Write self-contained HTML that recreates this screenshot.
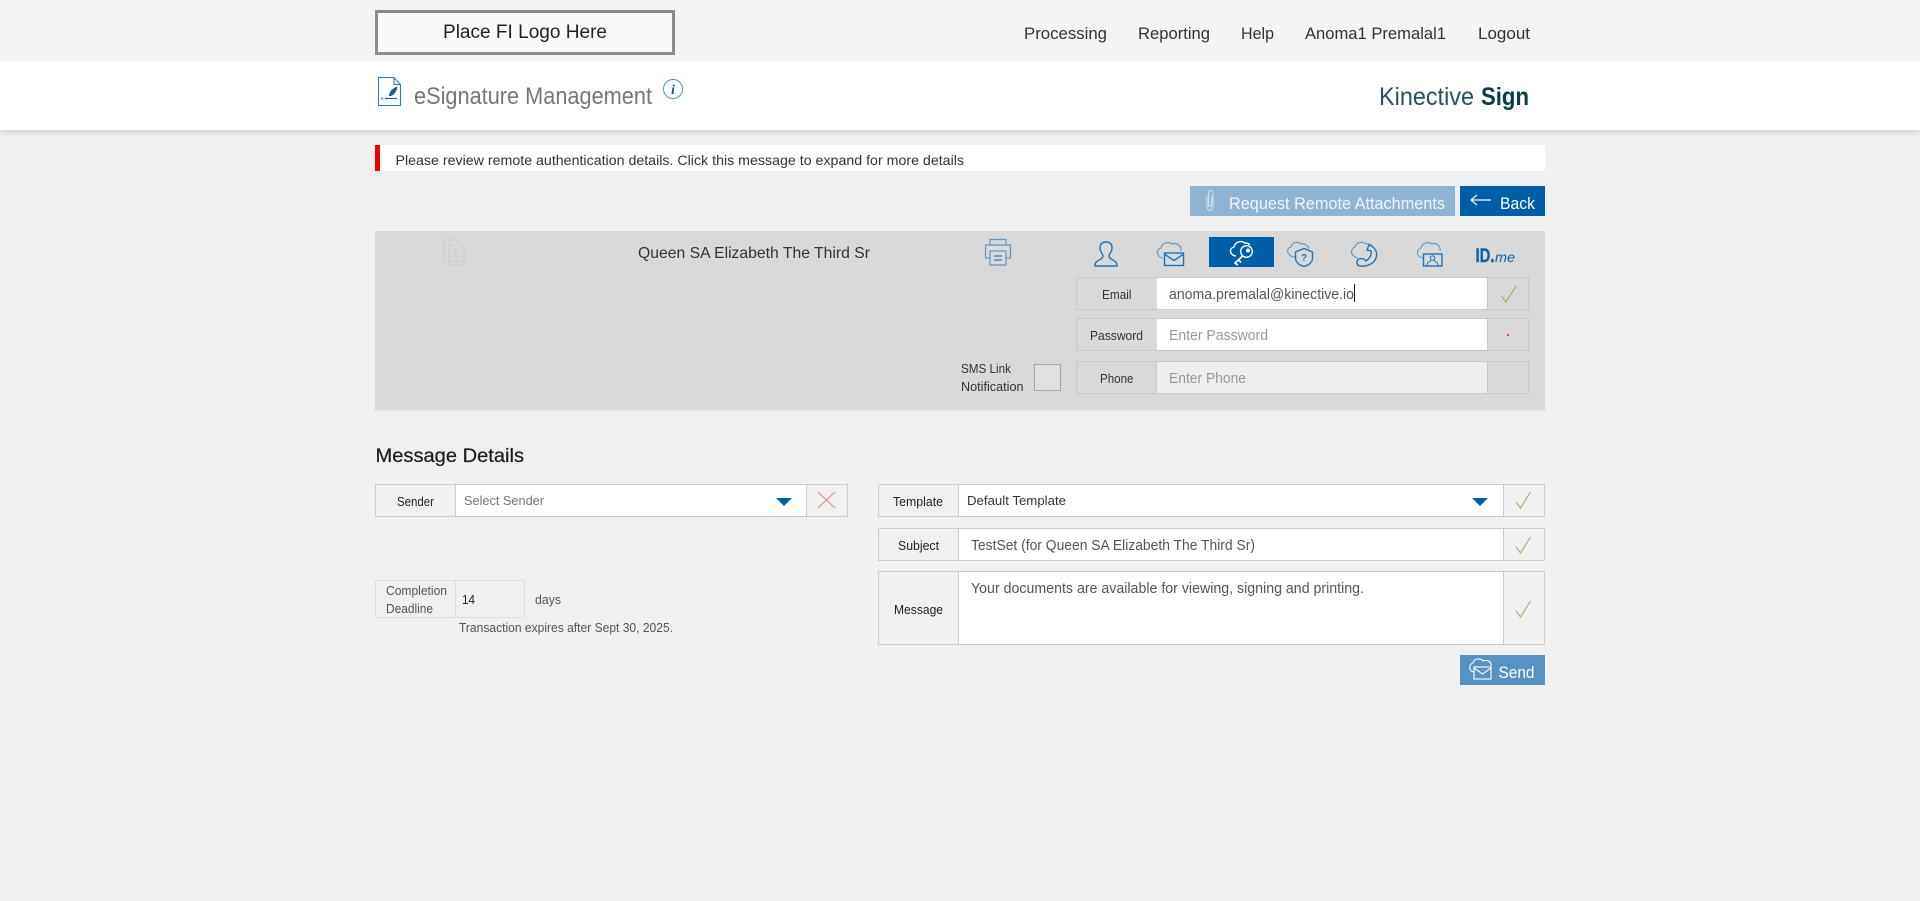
<!DOCTYPE html>
<html lang="en"><head><meta charset="utf-8"><title>eSignature Management</title>
<style>
html,body{margin:0;padding:0;background:#f0f0f0;overflow:hidden}
svg{display:block;position:absolute;left:0;top:0}
text{font-family:"Liberation Sans",sans-serif;white-space:pre}
</style></head><body>
<svg xmlns="http://www.w3.org/2000/svg" width="1920" height="901" viewBox="0 0 1920 901">
<defs><filter id="s" x="-5%" y="-200%" width="110%" height="500%"><feGaussianBlur stdDeviation="3"/></filter></defs>
<rect width="1920" height="901" fill="#f0f0f0"/>
<rect width="1920" height="62" fill="#f4f4f4"/>
<rect y="127" width="1920" height="5" fill="#c6c6c6" filter="url(#s)"/>
<rect y="62" width="1920" height="68" fill="#fff"/>
<rect x="376.500" y="11.500" width="297" height="42" fill="#fafafa" stroke="#8c8c8c" stroke-width="3"/>
<text x="443" y="38" font-size="19" fill="#222" textLength="164" lengthAdjust="spacingAndGlyphs">Place FI Logo Here</text>
<g font-size="17" fill="#333">
<text x="1024" y="39" textLength="83" lengthAdjust="spacingAndGlyphs">Processing</text>
<text x="1138" y="39" textLength="72" lengthAdjust="spacingAndGlyphs">Reporting</text>
<text x="1241" y="39" textLength="33" lengthAdjust="spacingAndGlyphs">Help</text>
<text x="1305" y="39" textLength="141" lengthAdjust="spacingAndGlyphs">Anoma1 Premalal1</text>
<text x="1478" y="39" textLength="52" lengthAdjust="spacingAndGlyphs">Logout</text>
</g>
<g fill="none" stroke="#2a78bd" stroke-width="1"><path d="M378.500 77.500H394L400.500 84.500V105.500H378.500Z"/><path d="M394 77.500V84.500H400.500"/></g>
<path d="M389 96C389 91 393 88 397.500 86.500C397 91 394 95 391 96Z" fill="#1d5f9e"/><path d="M385 98.500H397" stroke="#1d5f9e" stroke-width="1.100"/><text x="381" y="100" font-size="5" fill="#1d5f9e">x</text>
<text x="414" y="104" font-size="24" fill="#777" textLength="238" lengthAdjust="spacingAndGlyphs">eSignature Management</text>
<circle cx="673" cy="89" r="9.500" fill="none" stroke="#4a93c9" stroke-width="1"/>
<text x="673" y="94" font-size="14" font-weight="bold" font-style="italic" fill="#14508c" text-anchor="middle" style="font-family:'Liberation Serif',serif">i</text>
<text x="1379" y="105" font-size="25" fill="#26525c" textLength="95" lengthAdjust="spacingAndGlyphs">Kinective</text>
<text x="1481" y="105" font-size="25" font-weight="bold" fill="#0d3b45" textLength="48" lengthAdjust="spacingAndGlyphs">Sign</text>

<rect x="375" y="145" width="1170" height="26" rx="2" fill="#fff"/>
<rect x="375" y="145" width="5" height="26" fill="#f00000"/>
<text x="395.500" y="165" font-size="14" fill="#333" textLength="568.500" lengthAdjust="spacingAndGlyphs">Please review remote authentication details. Click this message to expand for more details</text>

<rect x="1190" y="186" width="265" height="30" fill="#8fb4d3"/>
<path d="M1207 196V206C1207 212 1213 212 1213 206V194C1213 189.500 1208.500 189.500 1208.500 194V205C1208.500 207 1211.500 207 1211.500 205V196" fill="none" stroke="#dbe7f1" stroke-width=".9"/>
<text x="1229" y="209" font-size="17" fill="#f2f6fa" textLength="216" lengthAdjust="spacingAndGlyphs">Request Remote Attachments</text>
<rect x="1460" y="186" width="85" height="30" fill="#005ea8"/>
<path d="M1491 200H1471M1477 195L1471 200L1477 205" fill="none" stroke="#fff" stroke-width="1.200"/>
<text x="1500" y="209" font-size="17" fill="#fff" textLength="35" lengthAdjust="spacingAndGlyphs">Back</text>

<rect x="375" y="231" width="1170" height="179" fill="#d9d9d9"/>
<rect x="374.500" y="409.500" width="1171" height="1.500" fill="#e2e2e2"/>
<g fill="none" stroke="#d0d0d0" stroke-width="1.500"><path d="M449 244V265H463"/><path d="M444 240H457L464 247V262H444Z"/></g><text x="452" y="257" font-size="12" font-weight="bold" fill="#cfcfcf">1</text>
<text x="638" y="258" font-size="16" fill="#333" textLength="232" lengthAdjust="spacingAndGlyphs">Queen SA Elizabeth The Third Sr</text>
<g fill="none" stroke="#5f96c4" stroke-width="1.200"><path d="M990 245V239.500H1006V245"/><path d="M990 258H985.500V245H1010.500V258H1006"/><path d="M990 251H1006V265H990Z"/><path d="M994 256H1002M994 260H1002" stroke="#2a78bd"/></g>

<rect x="1209" y="237" width="65" height="30" fill="#005ea8"/>
<g fill="none" stroke="#1f74b8" stroke-width="1.400">
<path d="M1103 256C1103 254 1100 252 1100 248C1100 244 1102 242 1106 242C1110 242 1112 244 1112 248C1112 252 1109 254 1109 256C1109 260 1117 260 1117 265V266H1095V265C1095 260 1103 260 1103 256Z"/>
<path d="M1163 258C1156 257 1156 249 1161 248C1162 243 1168 241 1172 244C1176 242 1182 246 1181 251" stroke="#5f96c4" stroke-width="1.100"/>
<rect x="1164.500" y="253" width="19" height="12.500"/><path d="M1164.500 254L1174 260.500L1183.500 254"/>
<path d="M1295 257C1286 256 1286 248 1291 247C1292 242 1298 241 1301 244C1304 243 1308 245 1309 249" stroke="#5f96c4" stroke-width="1.100"/>
<path d="M1304 248.500L1312.500 252V258C1312.500 262 1309 265 1304 266.500C1299 265 1295.500 262 1295.500 258V252Z" fill="#d9d9d9"/>
<path d="M1358 258C1350 256 1350 249 1355 247C1356 242 1363 241 1366 244C1369 243 1372 245 1373 247" stroke="#5f96c4" stroke-width="1.100"/>
<path d="M1369 245C1375 247 1378 252 1376 258C1374 264 1366 267 1360 266C1356 265 1356 261 1359 259C1362 258 1365 259 1366 261C1369 259 1372 255 1371 251L1367 250Z"/>
<path d="M1423 258C1416 257 1416 249 1421 248C1422 243 1428 241 1432 244C1436 242 1441 246 1440 251" stroke="#5f96c4" stroke-width="1.100"/>
<rect x="1423.500" y="254" width="18.500" height="12" fill="#d9d9d9"/>
<circle cx="1432.500" cy="258" r="2.300" stroke-width="1"/><path d="M1427 265.500C1427 261.500 1430 262 1431 260.500M1434 260.500C1435 262 1438 261.500 1438 265.500" stroke-width="1"/>
</g>
<text x="1301" y="261" font-size="10" font-weight="bold" fill="#1f74b8">?</text>
<g fill="none" stroke="#fff" stroke-width="1.400">
<path d="M1236 256C1229 255 1229 248 1234 247C1235 242 1241 240 1245 243C1247 243 1249 244 1250 245"/>
<circle cx="1246.500" cy="251.500" r="5.800"/><circle cx="1248" cy="250.500" r="1.300" fill="#fff"/>
<path d="M1242.500 256L1235 263L1238 265M1238.500 260L1241 262.500" stroke-width="1.700"/>
</g>
<text x="1475.500" y="262" font-size="19" font-weight="bold" fill="#1161a7" stroke="#1161a7" stroke-width=".4" textLength="19" lengthAdjust="spacingAndGlyphs">ID.</text>
<text x="1495" y="262" font-size="14" font-style="italic" fill="#1161a7" textLength="20" lengthAdjust="spacingAndGlyphs">me</text>

<g fill="#d9d9d9" stroke="#c8c8c8" stroke-width="1">
<rect x="1076.500" y="277.500" width="452" height="32"/>
<rect x="1076.500" y="318.500" width="452" height="32"/>
<rect x="1076.500" y="361.500" width="452" height="32"/>
</g>
<rect x="1157" y="278" width="330" height="31" fill="#fff"/>
<rect x="1157" y="319" width="330" height="31" fill="#fff"/>
<rect x="1157" y="362" width="330" height="31" fill="#eee"/>
<g stroke="#c8c8c8" stroke-width="1"><path d="M1487.500 278V309M1487.500 319V350M1487.500 362V393M1156.500 362V393"/></g>
<rect x="1034.500" y="364.500" width="26" height="26" fill="#e0e0e0" stroke="#a8a8a8"/>
<g font-size="13" fill="#333">
<text x="1102" y="299" textLength="29.500" lengthAdjust="spacingAndGlyphs">Email</text>
<text x="1090" y="340" textLength="53" lengthAdjust="spacingAndGlyphs">Password</text>
<text x="1100" y="383" textLength="33.500" lengthAdjust="spacingAndGlyphs">Phone</text>
<text x="961" y="373" textLength="50" lengthAdjust="spacingAndGlyphs">SMS Link</text>
<text x="961" y="391" textLength="62.500" lengthAdjust="spacingAndGlyphs">Notification</text>
</g>
<text x="1169" y="299" font-size="15" fill="#555" textLength="185" lengthAdjust="spacingAndGlyphs">anoma.premalal@kinective.io</text>
<rect x="1354" y="284" width="1" height="18" fill="#222"/>
<text x="1169" y="340" font-size="14.500" fill="#999" textLength="99" lengthAdjust="spacingAndGlyphs">Enter Password</text>
<text x="1169" y="383" font-size="14.500" fill="#999" textLength="77" lengthAdjust="spacingAndGlyphs">Enter Phone</text>
<path d="M1501.500 296L1506 302L1516 286" fill="none" stroke="#8ab56a" stroke-width="1.100"/>
<rect x="1507" y="334" width="2" height="2" fill="#f04040"/>

<text x="375.500" y="462" font-size="19" fill="#1a1a1a" stroke="#1a1a1a" stroke-width=".2" textLength="148.500" lengthAdjust="spacingAndGlyphs">Message Details</text>
<g fill="#f0f0f0" stroke="#ccc" stroke-width="1">
<rect x="375.500" y="484.500" width="472" height="32"/>
<rect x="878.500" y="484.500" width="666" height="32"/>
<rect x="878.500" y="528.500" width="666" height="32"/>
<rect x="878.500" y="571.500" width="666" height="73"/>
</g>
<g fill="#fff">
<rect x="456" y="485" width="350" height="31"/>
<rect x="958.500" y="485" width="545" height="31"/>
<rect x="958.500" y="529" width="545" height="31"/>
<rect x="958.500" y="572" width="545" height="72"/>
</g>
<g stroke="#ccc" stroke-width="1"><path d="M455.500 485V516M806.500 485V516M958.500 485V516M1503.500 485V516M958.500 529V560M1503.500 529V560M958.500 572V644M1503.500 572V644"/></g>
<g font-size="13" fill="#222">
<text x="397" y="506" textLength="37" lengthAdjust="spacingAndGlyphs">Sender</text>
<text x="893" y="506" textLength="50" lengthAdjust="spacingAndGlyphs">Template</text>
<text x="898" y="550" textLength="41" lengthAdjust="spacingAndGlyphs">Subject</text>
<text x="894" y="614" textLength="49" lengthAdjust="spacingAndGlyphs">Message</text>
</g>
<text x="464" y="505" font-size="13" fill="#777" textLength="80" lengthAdjust="spacingAndGlyphs">Select Sender</text>
<text x="967" y="505" font-size="13" fill="#333" textLength="99" lengthAdjust="spacingAndGlyphs">Default Template</text>
<text x="971" y="550" font-size="14.500" fill="#555" textLength="284" lengthAdjust="spacingAndGlyphs">TestSet (for Queen SA Elizabeth The Third Sr)</text>
<text x="971" y="593" font-size="14.500" fill="#555" textLength="393" lengthAdjust="spacingAndGlyphs">Your documents are available for viewing, signing and printing.</text>
<path d="M776 498H792L784 506Z" fill="#005ea8"/>
<path d="M1472 498H1488L1480 506Z" fill="#005ea8"/>
<path d="M818 492L835 508M835 492L818 508" stroke="#e08a8a" stroke-width="1.100"/>
<g fill="none" stroke="#9bb565" stroke-width="1.100">
<path d="M1516 502L1520.500 508L1530.500 492"/>
<path d="M1516 547L1520.500 553L1530.500 537"/>
<path d="M1516 611L1520.500 617L1530.500 601"/>
</g>
<g fill="none" stroke="#dedede"><rect x="375.500" y="580.500" width="149" height="37"/><path d="M455.500 581V617"/></g>
<g font-size="12.500" fill="#555">
<text x="386" y="595" textLength="61" lengthAdjust="spacingAndGlyphs">Completion</text>
<text x="386" y="613" textLength="47" lengthAdjust="spacingAndGlyphs">Deadline</text>
<text x="535" y="604" textLength="26" lengthAdjust="spacingAndGlyphs">days</text>
<text x="459" y="632" textLength="214" lengthAdjust="spacingAndGlyphs">Transaction expires after Sept 30, 2025.</text>
</g>
<text x="462" y="604" font-size="12.500" fill="#222" textLength="13" lengthAdjust="spacingAndGlyphs">14</text>

<rect x="1460" y="655" width="85" height="30" fill="#5792c2"/>
<g fill="none" stroke="#fff" stroke-width="1.100"><path d="M1474 672C1468 671 1469 664 1473 663C1474 658 1481 658 1483 661C1487 659 1492 662 1491 666"/><rect x="1474" y="667" width="17" height="12"/><path d="M1474 668L1482.500 674L1491 668"/></g>
<text x="1498.500" y="678" font-size="17" fill="#fff" textLength="36" lengthAdjust="spacingAndGlyphs">Send</text>
</svg>
</body></html>
